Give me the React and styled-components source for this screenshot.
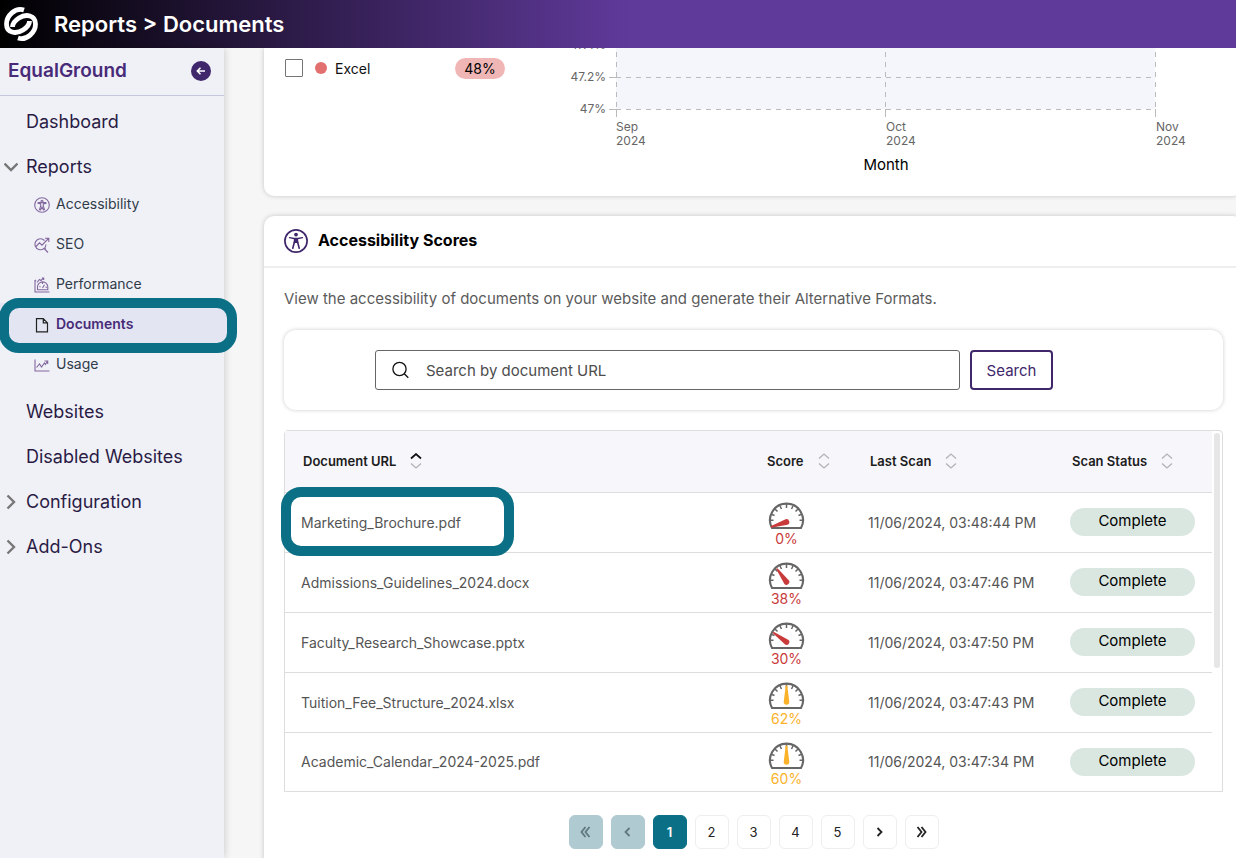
import React from "react";
import styled, { createGlobalStyle, css } from "styled-components";

const GlobalStyle = createGlobalStyle`
  * { box-sizing: border-box; }
  body { margin: 0; background: #f6f6f6; font-family: Inter, "Liberation Sans", sans-serif; color: #000; }
  button, input { font: inherit; }
  h1, h2, p, ul { margin: 0; padding: 0; }
  ul { list-style: none; }
`;

const Page = styled.div`
  display: flex;
  flex-direction: column;
  height: 100vh;
  overflow: hidden;
`;

const TopBar = styled.header`
  display: flex;
  align-items: center;
  gap: 12px;
  flex: none;
  height: 48px;
  padding-left: 2px;
  background: linear-gradient(90deg, #000 0%, #603a9b 51%);
`;

const PageTitle = styled.h1`
  color: #fff;
  font-size: 22px;
  line-height: 28px;
  font-weight: 600;
`;

const Body = styled.div`
  display: flex;
  flex: 1;
  min-height: 0;
`;

const Sidebar = styled.nav`
  flex: none;
  width: 224px;
  background: #f0f1f7;
  box-shadow: 0 0 8px rgba(0, 0, 0, 0.2);
  z-index: 1;
`;

const Brand = styled.div`
  display: flex;
  align-items: center;
  justify-content: space-between;
  height: 48px;
  padding: 0 13px 2px 8px;
  border-bottom: 1px solid #c6c9dc;
  color: #482b78;
  font-size: 19px;
  font-weight: 600;
`;

const CollapseButton = styled.button`
  display: grid;
  place-items: center;
  width: 20px;
  height: 20px;
  padding: 0;
  border: 0;
  border-radius: 50%;
  background: #40276c;
`;

const NavList = styled.ul`
  padding-top: 3px;
`;

const NavLink = styled.a`
  display: flex;
  align-items: center;
  height: 45px;
  color: #2a1b45;
  font-size: 18px;
  text-decoration: none;
`;

const Chevron = styled.span`
  display: grid;
  place-items: center start;
  width: 26px;
  padding-left: 4px;
`;

const SubList = styled.ul`
  padding: 0 0 6px;
  margin-top: -6px;
`;

const SubItem = styled.li`
  position: relative;
  background: ${(p) => (p.$active ? "#e3e5f2" : "transparent")};
`;

const SubLink = styled.a`
  position: relative;
  z-index: 1;
  display: flex;
  align-items: center;
  gap: 6px;
  height: 40px;
  padding-left: 34px;
  color: ${(p) => (p.$active ? "#482b78" : "#2f3b4a")};
  font-size: 14px;
  font-weight: ${(p) => (p.$active ? 600 : 400)};
  text-decoration: none;
  svg { margin-top: 4px; }
`;

const ring = css`
  position: absolute;
  border: 10px solid #0b7085;
  border-radius: 20px;
  pointer-events: none;
`;

const NavRing = styled.span`
  ${ring}
  inset: -5px -13px -10px -1px;
  background: #e3e5f2;
`;

const CellRing = styled.span`
  ${ring}
  top: -6px;
  left: -4px;
  width: 233px;
  height: 69px;
`;

const Main = styled.main`
  flex: 1;
  min-width: 0;
  overflow: hidden;
  padding-left: 40px;
`;

const Card = styled.section`
  margin-right: -7px;
  background: #fff;
  box-shadow: 0 0 5px rgba(0, 0, 0, 0.2);
`;

const ChartCard = styled(Card)`
  display: flex;
  height: 148px;
  margin-bottom: 20px;
  padding: 0 20px;
  border-radius: 0 0 10px 10px;
`;

const Legend = styled.div`
  display: flex;
  align-items: center;
  width: 280px;
  height: 40px;
`;

const LegendLabel = styled.label`
  display: flex;
  align-items: center;
  flex: 1;
  gap: 8px;
  font-size: 14px;
  color: #111;
`;

const Tick = styled.input`
  appearance: none;
  width: 18px;
  height: 18px;
  margin: 0 4px 0 1px;
  border: 1px solid #767676;
  border-radius: 1px;
  background: #fff;
`;

const Dot = styled.span`
  width: 12px;
  height: 12px;
  border-radius: 50%;
  background: #e2706e;
`;

const Share = styled.span`
  width: 50px;
  margin-right: 59px;
  border-radius: 11px;
  background: #f0b6b5;
  font-size: 14px;
  line-height: 21px;
  text-align: center;
`;

const ChartDrawing = styled.svg`
  flex: none;
  display: block;
  font-size: 12px;
`;

const ScoresCard = styled(Card)`
  border-radius: 10px 10px 0 0;
  min-height: 660px;
`;

const CardHeader = styled.div`
  display: flex;
  align-items: center;
  gap: 10px;
  height: 52px;
  padding: 0 20px;
  border-bottom: 2px solid #eee;
`;

const CardTitle = styled.h2`
  padding-bottom: 2px;
  font-size: 16px;
  line-height: 22px;
  font-weight: 700;
`;

const CardBody = styled.div`
  padding: 20px;
`;

const Intro = styled.p`
  color: #5b5b5b;
  font-size: 15px;
  line-height: 22px;
`;

const SearchPanel = styled.form`
  display: flex;
  gap: 10px;
  margin: 20px 0;
  padding: 20px 170px 20px 91px;
  border-radius: 12px;
  background: #fff;
  box-shadow: 0 0 4px rgba(0, 0, 0, 0.2);
`;

const SearchField = styled.label`
  display: flex;
  align-items: center;
  flex: 1;
  gap: 16px;
  height: 40px;
  padding-left: 16px;
  border: 1px solid #666;
  border-radius: 3px;
`;

const SearchInput = styled.input`
  flex: 1;
  min-width: 0;
  padding: 0;
  border: 0;
  outline: 0;
  background: transparent;
  font-size: 15px;
  &::placeholder { color: #4d4d4d; opacity: 1; }
`;

const SearchButton = styled.button`
  width: 83px;
  border: 2px solid #40276c;
  border-radius: 4px;
  padding: 0;
  background: #fff;
  color: #40276c;
  font-size: 15px;
`;

const TableFrame = styled.div`
  display: flex;
  border: 1px solid #ddd;
  border-radius: 4px 4px 0 0;
`;

const DataTable = styled.table`
  flex: 1;
  table-layout: fixed;
  border-collapse: collapse;
  font-size: 14px;
`;

const HeadCell = styled.th`
  width: ${(p) => p.$width || "auto"};
  height: 61px;
  padding: 0 0 0 ${(p) => p.$pad || "18px"};
  border-bottom: 1px solid #ddd;
  background: #f6f6fb;
  color: #1c1c1c;
  font-size: 13px;
  font-weight: 600;
  text-align: left;
`;

const SortButton = styled.button`
  display: flex;
  align-items: center;
  gap: 14px;
  padding: 0;
  border: 0;
  background: none;
  color: inherit;
`;

const Cell = styled.td`
  position: relative;
  height: 60px;
  padding: 0 0 0 16px;
  border-bottom: 1px solid #ddd;
  color: #555;
`;

const Row = styled.tr`
  &:last-child ${Cell} {
    height: 59px;
    border-bottom: 0;
  }
`;

const Score = styled.div`
  display: flex;
  flex-direction: column;
  align-items: center;
  width: 41px;
  padding-top: 6px;
  color: ${(p) => p.$color};
  line-height: 18px;
`;

const Status = styled.span`
  display: block;
  width: 125px;
  height: 28px;
  border-radius: 14px;
  background: #dae7e0;
  color: #000;
  font-size: 15px;
  line-height: 26px;
  text-align: center;
`;

const ScrollTrack = styled.div`
  width: 10px;
  padding: 2px;
`;

const ScrollThumb = styled.div`
  height: 66%;
  border-radius: 3px;
  background: #e6e6e6;
`;

const Pager = styled.nav`
  display: flex;
  justify-content: center;
  gap: 8px;
  margin-top: 23px;
`;

const pagerTone = {
  plain: css`background: #fff; border-color: #eee; color: #222;`,
  current: css`background: #0b7085; border-color: #0b7085; color: #fff; font-weight: 600;`,
  off: css`background: #b0cad1; border-color: #b0cad1; color: #60777d;`,
};

const PageButton = styled.button`
  display: grid;
  place-items: center;
  width: 34px;
  height: 34px;
  padding: 0;
  border: 1px solid;
  border-radius: 6px;
  font-size: 13px;
  ${(p) => pagerTone[p.$tone]}
`;

const Logo = () => (
  <svg width="40" height="40" viewBox="0 0 40 40" fill="none" stroke="#fff" strokeWidth="4.8" aria-hidden="true">
    <path d="M22 6C13 3 4.500 12 4.500 20C4.500 29 14 30.500 21 26C25 23.500 27.500 20.500 27.500 17" />
    <path d="M16 34C25 37 33.500 28 33.500 20C33.500 11 24 9.500 17 14C13 16.500 10.500 19.500 10.500 23" />
  </svg>
);

const PersonIcon = () => (
  <svg width="24" height="24" viewBox="0 0 24 24" fill="none" stroke="#40276c" aria-hidden="true">
    <circle cx="12" cy="12" r="11.100" strokeWidth="1.700" />
    <circle cx="12" cy="5.600" r="1.900" fill="#40276c" stroke="none" />
    <path d="M5.500 8.600L10 9.500H14L18.500 8.600" strokeWidth="1.400" strokeLinecap="round" />
    <path d="M10 9H14L14.400 14H9.600Z" fill="#40276c" stroke="none" />
    <path d="M10.400 13L8.800 19.300M13.600 13L15.200 19.300" strokeWidth="1.600" strokeLinecap="round" />
  </svg>
);

const subIcons = {
  Accessibility: (
    <>
      <circle cx="8" cy="8" r="7.300" />
      <circle cx="8" cy="4.200" r="1" />
      <path d="M4 6.300L6.700 6.900V9L5.500 12.500L6.600 12.800L8 10L9.400 12.800L10.500 12.500L9.300 9V6.900L12 6.300L11.800 5.600H4.200Z" />
    </>
  ),
  SEO: (
    <>
      <path d="M10.500 3.500A5.500 5.500 0 1 0 12 7.500M10.200 11.500L14 15.500M10.800 10.500L11.500 12" />
      <path d="M2 9.500L5.500 5.800L8 8.200L14.500 1.500M11 1.300H14.800V5" />
    </>
  ),
  Performance: (
    <>
      <path d="M1 3V15H15.500M1 3L2 4" />
      <path d="M3.500 12.800V10A5 5 0 0 1 13.800 10V12.800ZM8.500 11L10.500 7.800M5.500 9.500L6.500 10M8.500 5.500V7M11.500 10.200H13" />
      <path d="M3 5.500L5.500 2.500L7 3.500L9.500 1.200M7.800 1H9.700V3" />
    </>
  ),
  Documents: (
    <path d="M2.500 1.700H9.300L13.500 5.900V14.800H2.500ZM9.300 1.700V5.900H13.500" stroke="#222" strokeWidth="1.200" />
  ),
  Usage: (
    <>
      <path d="M1 2.500V14H15.500" />
      <path d="M2.500 10.500L5.500 7L7.500 10L10.500 6L11.500 7.500L13.500 4M10.500 4H13.700V7" />
    </>
  ),
};

const SubIcon = ({ name }) => (
  <svg width="16" height="16" viewBox="0 0 16 16" fill="none" stroke="#83679f" strokeWidth="1.100" aria-hidden="true">
    {subIcons[name]}
  </svg>
);

const NavChevron = ({ kind }) => (
  <svg width="14" height="16" viewBox="0 0 14 16" fill="none" stroke="#777" strokeWidth="2.400" aria-hidden="true">
    {kind === "open" ? <path d="M0.500 4.500L7 11L13.500 4.500" /> : <path d="M3.500 1.500L10 8L3.500 14.500" />}
  </svg>
);

const SortIcon = ({ up }) => (
  <svg width="12" height="16" viewBox="0 0 12 16" fill="none" stroke="#b3b3b3" strokeWidth="1.300" aria-hidden="true">
    <path d="M1 5.500L6 1L11 5.500" stroke={up ? "#111" : "#b3b3b3"} strokeWidth={up ? 1.7 : 1.3} />
    <path d="M1 10.500L6 15L11 10.500" />
  </svg>
);

const Gauge = ({ angle, color }) => (
  <svg width="37" height="28" viewBox="0 0 37 28" fill="none" stroke="#666" aria-hidden="true">
    <path d="M4 26A16.500 16.500 0 1 1 33 26Z" strokeWidth="2.100" strokeLinejoin="round" />
    <path d="M18.500 2V6M2.500 18.300H5.500M34.500 18.300H31.500M7 7L9.500 9.500M30 7L27.500 9.500M4 12.500L6.500 13.500M33 12.500L30.500 13.500M12 4L13.500 7M25 4L23.500 7" strokeWidth="1.500" />
    <path d="M17.700 3.500H19.300L21.300 20A2.800 2.800 0 1 1 15.700 20Z" fill={color} stroke="none" transform={`rotate(${angle} 18.500 20)`} />
  </svg>
);

const PagerIcon = ({ kind }) => {
  const paths = {
    first: "M7.500 2L3.500 7L7.500 12M11.500 2L7.500 7L11.500 12",
    prev: "M9.500 3L5.500 7L9.500 11",
    next: "M5.500 3L9.500 7L5.500 11",
    last: "M3.500 2L7.500 7L3.500 12M7.500 2L11.500 7L7.500 12",
  };
  return (
    <svg width="15" height="14" viewBox="0 0 15 14" fill="none" stroke="currentColor" strokeWidth="1.800" aria-hidden="true">
      <path d={paths[kind]} />
    </svg>
  );
};

const Chart = () => (
  <ChartDrawing width="640" height="148" viewBox="0 0 640 148" role="img" aria-label="Score by month">
    <rect x="52" y="0" width="539" height="61" fill="#f5f6fb" />
    <g stroke="#bbb" fill="none" shapeRendering="crispEdges">
      <path d="M52.500 4V61M321.500 4V61M591.500 4V61" strokeDasharray="5 5" />
      <path d="M52 29.500H591M52 61.500H591" strokeDasharray="5 5" />
      <path d="M45 29.500H53M45 61.500H53M52.500 61V69M321.500 61V69M591.500 61V69" />
    </g>
    <g fill="#666" textAnchor="end">
      <text x="42" y="1">47.4%</text>
      <text x="42" y="33">47.2%</text>
      <text x="42" y="65">47%</text>
    </g>
    <g fill="#666">
      {["Sep", "Oct", "Nov"].map((month, i) => (
        <text key={month}>
          <tspan x={[52, 322, 592][i]} y="83">{month}</tspan>
          <tspan x={[52, 322, 592][i]} y="97">2024</tspan>
        </text>
      ))}
    </g>
    <text x="322" y="122" textAnchor="middle" fontSize="15" fill="#000">Month</text>
  </ChartDrawing>
);

const red = "#c93a3a";
const amber = "#fbb22a";
const documents = [
  { name: "Marketing_Brochure.pdf", score: 0, angle: -108, color: red, date: "11/06/2024, 03:48:44 PM", ringed: true },
  { name: "Admissions_Guidelines_2024.docx", score: 38, angle: -36, color: red, date: "11/06/2024, 03:47:46 PM" },
  { name: "Faculty_Research_Showcase.pptx", score: 30, angle: -54, color: red, date: "11/06/2024, 03:47:50 PM" },
  { name: "Tuition_Fee_Structure_2024.xlsx", score: 62, angle: 0, color: amber, date: "11/06/2024, 03:47:43 PM" },
  { name: "Academic_Calendar_2024-2025.pdf", score: 60, angle: 0, color: amber, date: "11/06/2024, 03:47:34 PM" },
];

const NavEntry = ({ label, kind }) => (
  <NavLink href="#">
    <Chevron>{kind && <NavChevron kind={kind} />}</Chevron>
    {label}
  </NavLink>
);

const SortHeader = ({ label, up, width, pad }) => (
  <HeadCell $width={width} $pad={pad} scope="col">
    <SortButton type="button">
      {label}
      <SortIcon up={up} />
    </SortButton>
  </HeadCell>
);

export default function App() {
  return (
    <Page>
      <GlobalStyle />
      <TopBar>
        <Logo />
        <PageTitle>Reports &gt; Documents</PageTitle>
      </TopBar>
      <Body>
        <Sidebar aria-label="Main">
          <Brand>
            EqualGround
            <CollapseButton type="button" aria-label="Collapse menu">
              <svg width="10" height="10" viewBox="0 0 10 10" fill="none" stroke="#fff" strokeWidth="1.500">
                <path d="M9 5H1.500M4.500 1.800L1.300 5L4.500 8.200" />
              </svg>
            </CollapseButton>
          </Brand>
          <NavList>
            <li><NavEntry label="Dashboard" /></li>
            <li>
              <NavEntry label="Reports" kind="open" />
              <SubList>
                {Object.keys(subIcons).map((name) => {
                  const active = name === "Documents";
                  return (
                    <SubItem key={name} $active={active}>
                      {active && <NavRing />}
                      <SubLink href="#" $active={active}>
                        <SubIcon name={name} />
                        {name}
                      </SubLink>
                    </SubItem>
                  );
                })}
              </SubList>
            </li>
            <li><NavEntry label="Websites" /></li>
            <li><NavEntry label="Disabled Websites" /></li>
            <li><NavEntry label="Configuration" kind="closed" /></li>
            <li><NavEntry label="Add-Ons" kind="closed" /></li>
          </NavList>
        </Sidebar>
        <Main>
          <ChartCard>
            <Legend>
              <LegendLabel>
                <Tick type="checkbox" />
                <Dot />
                Excel
              </LegendLabel>
              <Share>48%</Share>
            </Legend>
            <Chart />
          </ChartCard>
          <ScoresCard>
            <CardHeader>
              <PersonIcon />
              <CardTitle>Accessibility Scores</CardTitle>
            </CardHeader>
            <CardBody>
              <Intro>View the accessibility of documents on your website and generate their Alternative Formats.</Intro>
              <SearchPanel>
                <SearchField>
                  <svg width="18" height="18" viewBox="0 0 18 18" fill="none" stroke="#111" strokeWidth="1.300" aria-hidden="true">
                    <circle cx="7.500" cy="8" r="6.600" />
                    <path d="M12.300 12.800L16.300 16.800" />
                  </svg>
                  <SearchInput type="text" placeholder="Search by document URL" aria-label="Search by document URL" />
                </SearchField>
                <SearchButton type="button">Search</SearchButton>
              </SearchPanel>
              <TableFrame>
                <DataTable>
                  <thead>
                    <tr>
                      <SortHeader label="Document URL" up />
                      <SortHeader label="Score" width="102px" pad="17px" />
                      <SortHeader label="Last Scan" width="202px" />
                      <SortHeader label="Scan Status" width="158px" />
                    </tr>
                  </thead>
                  <tbody>
                    {documents.map((d) => (
                      <Row key={d.name}>
                        <Cell>
                          {d.ringed && <CellRing />}
                          {d.name}
                        </Cell>
                        <Cell>
                          <Score $color={d.color}>
                            <Gauge angle={d.angle} color={d.color} />
                            {d.score}%
                          </Score>
                        </Cell>
                        <Cell>{d.date}</Cell>
                        <Cell><Status>Complete</Status></Cell>
                      </Row>
                    ))}
                  </tbody>
                </DataTable>
                <ScrollTrack><ScrollThumb /></ScrollTrack>
              </TableFrame>
              <Pager aria-label="Pages">
                <PageButton $tone="off" disabled aria-label="First page"><PagerIcon kind="first" /></PageButton>
                <PageButton $tone="off" disabled aria-label="Previous page"><PagerIcon kind="prev" /></PageButton>
                {[1, 2, 3, 4, 5].map((n) => (
                  <PageButton key={n} $tone={n === 1 ? "current" : "plain"}>{n}</PageButton>
                ))}
                <PageButton $tone="plain" aria-label="Next page"><PagerIcon kind="next" /></PageButton>
                <PageButton $tone="plain" aria-label="Last page"><PagerIcon kind="last" /></PageButton>
              </Pager>
            </CardBody>
          </ScoresCard>
        </Main>
      </Body>
    </Page>
  );
}
